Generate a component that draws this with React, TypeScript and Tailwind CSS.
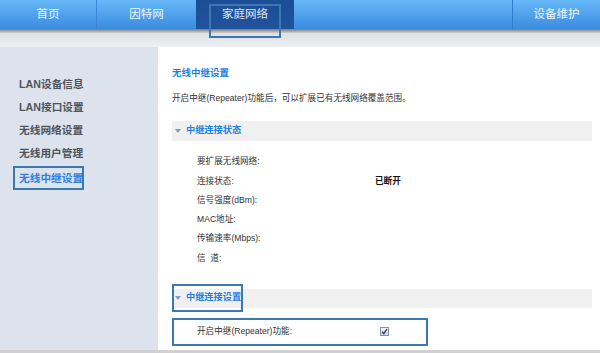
const sideItems = ["LAN设备信息", "LAN接口设置", "无线网络设置", "无线用户管理"];

const statusRows = [
  { label: "要扩展无线网络:", value: "" },
  { label: "连接状态:", value: "已断开" },
  { label: "信号强度(dBm):", value: "" },
  { label: "MAC地址:", value: "" },
  { label: "传输速率(Mbps):", value: "" },
  { label: "信  道:", value: "" },
];

function Triangle() {
  return (
    <svg width="6" height="4" viewBox="0 0 6 4" className="mr-[5px] ml-[3px]">
      <path d="M0 0 L6 0 L3 4 Z" fill="#7f9cc2" />
    </svg>
  );
}

function Checkbox() {
  return (
    <span className="flex h-[9px] w-[9px] items-center justify-center border border-[#8a8f99] bg-linear-to-b from-[#f4f4f4] to-[#d4d7dc]">
      <svg width="7" height="7" viewBox="0 0 7 7">
        <path d="M1 3.8 L2.8 5.6 L6 1.2" stroke="#27408b" strokeWidth="1.4" fill="none" />
      </svg>
    </span>
  );
}

export default function App() {
  return (
    <div
      className="flex h-[353px] w-[600px] flex-col overflow-hidden bg-white"
      style={{ fontFamily: '"Liberation Sans", "Noto Sans CJK SC", sans-serif' }}
    >
      {/* top navigation */}
      <div className="relative z-10 flex h-[29px] shrink-0 bg-linear-to-b from-[#66b8f8] to-[#3a8ce0] text-[11.5px] text-[#eef6ff]">
        <div className="flex w-[97px] items-center justify-center border-r border-[#3b86d4]">首页</div>
        <div className="flex w-[99px] items-center justify-center">因特网</div>
        <div className="relative flex w-[98px] items-center justify-center bg-linear-to-b from-[#1d4d97] to-[#21529c] text-[#dfe8f6]">
          家庭网络
          <span className="absolute top-[4px] left-[13px] h-[34px] w-[72px] border-2 border-[#3a79b0]" />
        </div>
        <div className="flex-1" />
        <div className="flex w-[88px] items-center justify-center border-l border-[#2f7bcc]">设备维护</div>
      </div>
      <div className="h-[4px] shrink-0 bg-linear-to-b from-[#7b7b7b] to-[#d2d2d2]" />
      <div className="h-[14px] shrink-0 bg-linear-to-b from-[#dedfe1] to-[#eef0f3]" />

      {/* body */}
      <div className="flex flex-1">
        <div className="w-[158px] shrink-0 bg-[#dce3ed] pt-[26px] pl-[19px] text-[10.7px] font-bold whitespace-nowrap text-[#50555d]">
          {sideItems.map((item) => (
            <div key={item} className="h-[23px] leading-[23px]">
              {item}
            </div>
          ))}
          <div className="mt-[1px] ml-[-6px] h-[24px] w-[71px] border-2 border-[#3b79b1] pl-[4px] leading-[20px] text-[#2f7fe6]">
            无线中继设置
          </div>
        </div>

        <div className="mt-[1px] flex-1 pl-[14px] pr-[8px] text-[8.6px] text-[#333]">
          <div className="mt-[18px] text-[9.5px] leading-[14px] font-bold text-[#1e7fe6]">无线中继设置</div>
          <div className="mt-[11px] leading-[14px]">开启中继(Repeater)功能后，可以扩展已有无线网络覆盖范围。</div>

          <div className="mt-[16px] flex h-[20px] items-center bg-[#f0f0f0] text-[9.2px] font-bold text-[#1e7fe6]">
            <Triangle />
            中继连接状态
          </div>

          <div className="mt-[11px] pl-[25px]">
            {statusRows.map((row) => (
              <div key={row.label} className="flex h-[19.3px] items-center whitespace-pre">
                <span className="w-[178px]">{row.label}</span>
                <span className="font-bold text-[#111]">{row.value}</span>
              </div>
            ))}
          </div>

          <div className="relative mt-[21px] flex h-[19px] items-center bg-[#f0f0f0] text-[9.2px] font-bold text-[#1e7fe6]">
            <Triangle />
            中继连接设置
            <span className="absolute top-[-5px] left-0 h-[28px] w-[71px] border-2 border-[#3a79b0]" />
          </div>

          <div className="mt-[10px] flex h-[28px] w-[256px] items-center border-2 border-[#3a79b0] pl-[23px]">
            <span className="w-[183px]">开启中继(Repeater)功能:</span>
            <Checkbox />
          </div>
        </div>
      </div>
      <div className="h-[3px] shrink-0 bg-[#d0d0d0]" />
    </div>
  );
}
